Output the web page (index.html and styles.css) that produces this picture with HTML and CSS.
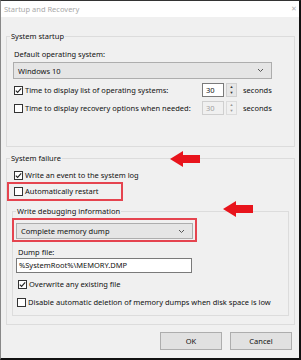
FILE: index.html
```html
<!DOCTYPE html>
<html>
<head>
<meta charset="utf-8">
<link rel="stylesheet" href="styles.css">
</head>
<body>
<div class="window">
  <div class="titlebar">
    <span class="title">Startup and Recovery</span>
    <span class="close">✕</span>
  </div>
  <div class="body">
    <div class="group startup">
      <div class="legend">System startup</div>
      <div class="label l-default">Default operating system:</div>
      <div class="select sel-os"><span>Windows 10</span><svg class="chev" width="7" height="5" viewBox="0 0 7 5"><path d="M1 1 L3.5 3.5 L6 1" fill="none" stroke="#555" stroke-width="1"/></svg></div>
      <div class="row row-spin">
        <span class="cb"><svg width="9" height="9" viewBox="0 0 9 9"><path d="M1.8 4.6 L3.6 6.4 L7.2 2.4" fill="none" stroke="#222" stroke-width="1.1"/></svg></span>
        <span class="row-label">Time to display list of operating systems:</span>
        <div class="spin">
          <div class="spin-input">30</div>
          <div class="spin-btns"><span>▲</span><span>▼</span></div>
        </div>
        <span class="unit">seconds</span>
      </div>
      <div class="row row-spin row-2">
        <span class="cb"></span>
        <span class="row-label">Time to display recovery options when needed:</span>
        <div class="spin disabled">
          <div class="spin-input">30</div>
          <div class="spin-btns"><span>▲</span><span>▼</span></div>
        </div>
        <span class="unit">seconds</span>
      </div>
    </div>

    <div class="group failure">
      <div class="legend">System failure</div>
      <div class="row row-event">
        <span class="cb"><svg width="9" height="9" viewBox="0 0 9 9"><path d="M1.8 4.6 L3.6 6.4 L7.2 2.4" fill="none" stroke="#222" stroke-width="1.1"/></svg></span>
        <span>Write an event to the system log</span>
      </div>
      <div class="redbox rb-restart">
        <div class="row">
          <span class="cb"></span>
          <span>Automatically restart</span>
        </div>
      </div>
      <div class="group inner">
        <div class="legend">Write debugging information</div>
        <div class="redbox rb-dump">
          <div class="select sel-dump"><span>Complete memory dump</span><svg class="chev" width="7" height="5" viewBox="0 0 7 5"><path d="M1 1 L3.5 3.5 L6 1" fill="none" stroke="#555" stroke-width="1"/></svg></div>
        </div>
        <div class="label l-dumpfile">Dump file:</div>
        <div class="textbox">%SystemRoot%\MEMORY.DMP</div>
        <div class="row row-over">
          <span class="cb"><svg width="9" height="9" viewBox="0 0 9 9"><path d="M1.8 4.6 L3.6 6.4 L7.2 2.4" fill="none" stroke="#222" stroke-width="1.1"/></svg></span>
          <span>Overwrite any existing file</span>
        </div>
        <div class="row row-disable">
          <span class="cb"></span>
          <span>Disable automatic deletion of memory dumps when disk space is low</span>
        </div>
      </div>
    </div>

    <div class="buttons">
      <div class="btn">OK</div>
      <div class="btn">Cancel</div>
    </div>
  </div>

  <svg class="arrow arrow-1" width="31" height="17" viewBox="0 0 31 17"><path d="M0 8 L13 0 L13 4 L30 4 L30 12 L13 12 L13 16 Z" fill="#e8141c"/></svg>
  <svg class="arrow arrow-2" width="31" height="17" viewBox="0 0 31 17"><path d="M0 8 L13 0 L13 4 L30 4 L30 12 L13 12 L13 16 Z" fill="#e8141c"/></svg>
</div>
</body>
</html>
```
FILE: styles.css
```css
* { box-sizing: border-box; }
html, body { margin: 0; padding: 0; background: #fff; }
body {
  font-family: "Noto Sans", "Open Sans", sans-serif;
  font-size: 7.5px;
  color: #111;
}
.window {
  position: relative;
  width: 301px;
  height: 360px;
  border-top: 1px solid #333;
  border-left: 1px solid #888;
  border-right: 2px solid #111;
  border-bottom: 2px solid #111;
  background: #f0f0f0;
  overflow: hidden;
}
.titlebar {
  height: 16px;
  background: #fff;
  display: flex;
  align-items: center;
  justify-content: space-between;
  padding: 0 2px 1px 3px;
  color: #a8a8a8;
  font-size: 7.5px;
}
.close { font-size: 7px; color: #b0b0b0; }
.body { display: flex; flex-direction: column; }

.group {
  border: 1px solid #dcdcdc;
  display: flex;
  flex-direction: column;
  align-items: flex-start;
}
.startup {
  margin: 19px 0 0 5px;
  width: 289px;
  height: 111px;
}
.failure {
  margin: 11px 0 0 5px;
  width: 289px;
  height: 167px;
}
.legend {
  height: 12px;
  line-height: 12px;
  margin: -7px 0 0 3px;
  padding: 0 1px;
  background: #f0f0f0;
}
.label { height: 12px; line-height: 12px; }
.l-default { margin: 6px 0 0 7px; }

.select {
  height: 17px;
  background: #e5e5e5;
  border: 1px solid #adadad;
  display: flex;
  align-items: center;
  justify-content: space-between;
  padding: 0 7px 0 4px;
}
.sel-os { margin: 2px 0 0 6px; width: 259px; }
.chev { display: block; }

.row {
  display: flex;
  align-items: center;
  height: 12px;
  line-height: 12px;
  white-space: nowrap;
}
.cb {
  width: 9px;
  height: 9px;
  border: 1px solid #333;
  background: #fff;
  margin-right: 2px;
  flex: 0 0 9px;
  display: flex;
}
.cb svg { margin: -1px; }
.row-spin { height: 14px; margin: 4px 0 0 7px; }
.row-label { width: 177px; }
.spin { display: flex; align-items: stretch; height: 14px; }
.spin-input {
  width: 22px;
  border: 1px solid #7a7a7a;
  background: #fff;
  padding-left: 3px;
  line-height: 12px;
}
.spin-btns {
  width: 11px;
  margin-left: 2px;
  display: flex;
  flex-direction: column;
  background: #e6e6e6;
  border: 1px solid #d0d0d0;
}
.spin-btns span {
  flex: 1;
  font-size: 4px;
  line-height: 6px;
  text-align: center;
  color: #333;
}
.spin.disabled .spin-input { border-color: #cfcfcf; background: #f0f0f0; color: #a0a0a0; }
.spin.disabled .spin-btns { background: #f0f0f0; border-color: #dcdcdc; }
.spin.disabled .spin-btns span { color: #999; }
.unit { margin-left: 6px; }

.row-event { margin: 5px 0 0 7px; }
.redbox { border: 2px solid #e5444f; }
.rb-restart { margin: 1px 0 0 0; width: 116px; height: 19px; padding: 1px 0 0 5px; }

.inner { margin: 10px 0 0 5px; width: 277px; height: 105px; }
.rb-dump { margin: 1px 0 0 -1px; width: 185px; height: 24px; padding: 3px 0 0 2px; }
.sel-dump { width: 177px; height: 16px; }
.l-dumpfile { margin: 4px 0 0 5px; }
.textbox {
  margin: 0 0 0 3px;
  width: 176px;
  height: 15px;
  line-height: 13px;
  border: 1px solid #7a7a7a;
  background: #fff;
  padding-left: 2px;
}
.row-over { margin: 5px 0 0 5px; }
.row-disable { margin: 6px 0 0 4px; }

.buttons {
  display: flex;
  justify-content: flex-end;
  gap: 8px;
  margin: 7px 7px 0 0;
}
.btn {
  width: 62px;
  height: 18px;
  line-height: 16px;
  text-align: center;
  background: #e1e1e1;
  border: 1px solid #adadad;
}

.arrow { position: absolute; display: block; }
.arrow-1 { left: 169px; top: 150px; }
.arrow-2 { left: 222px; top: 200px; }
```
